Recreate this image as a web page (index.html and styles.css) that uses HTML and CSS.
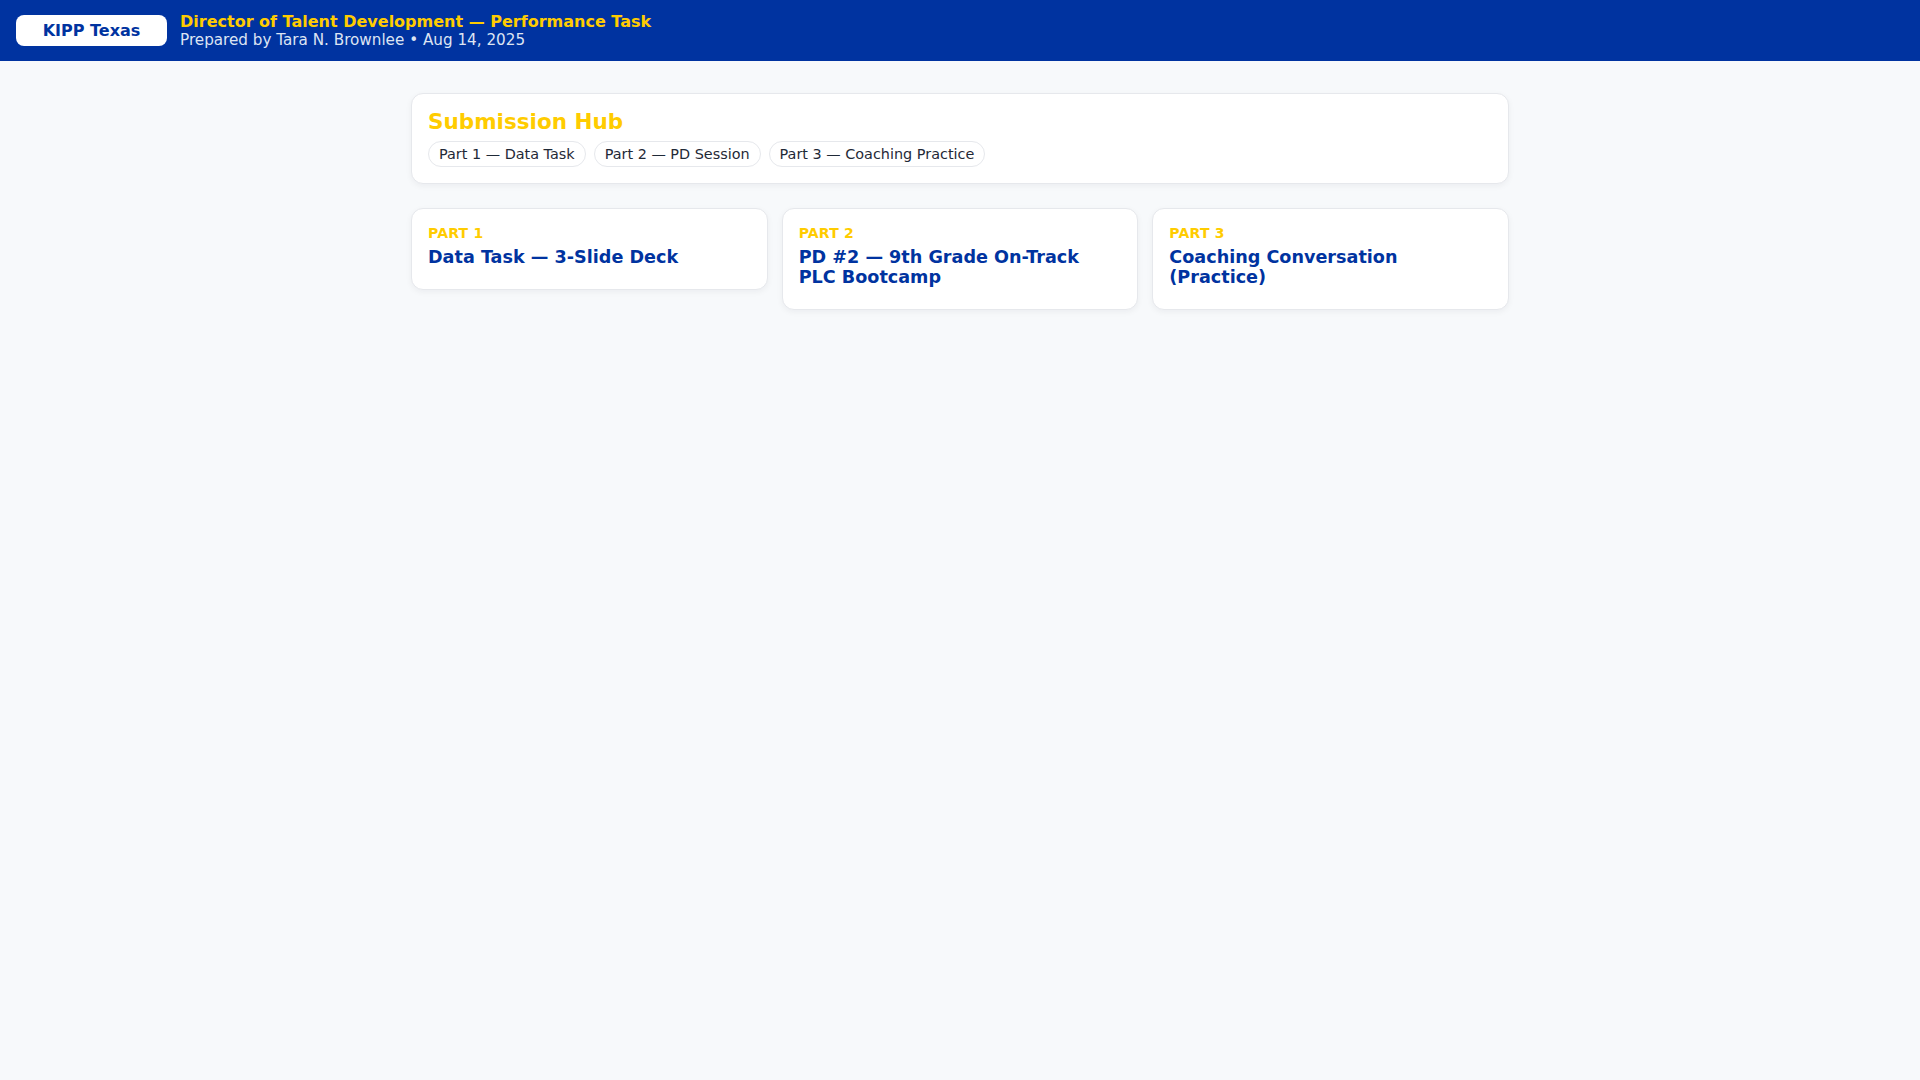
FILE: index.html
```html
<!DOCTYPE html>
<html lang="en">
<head>
<meta charset="utf-8">
<title>KIPP Texas — Submission Hub</title>
<link rel="stylesheet" href="styles.css">
</head>
<body>
<header class="topbar">
  <div class="brand">KIPP Texas</div>
  <div class="heading">
    <div class="heading-title">Director of Talent Development — Performance Task</div>
    <div class="heading-sub">Prepared by Tara N. Brownlee • Aug 14, 2025</div>
  </div>
</header>
<main class="wrap">
  <section class="card hub">
    <h2 class="hub-title">Submission Hub</h2>
    <div class="pills">
      <span class="pill">Part 1 — Data Task</span>
      <span class="pill">Part 2 — PD Session</span>
      <span class="pill">Part 3 — Coaching Practice</span>
    </div>
  </section>
  <section class="grid">
    <article class="card part">
      <div class="part-label">PART 1</div>
      <h3 class="part-title">Data Task — 3-Slide Deck</h3>
    </article>
    <article class="card part">
      <div class="part-label">PART 2</div>
      <h3 class="part-title">PD #2 — 9th Grade On-Track PLC Bootcamp</h3>
    </article>
    <article class="card part">
      <div class="part-label">PART 3</div>
      <h3 class="part-title">Coaching Conversation (Practice)</h3>
    </article>
  </section>
</main>
</body>
</html>
```
FILE: styles.css
```css
* { box-sizing: border-box; }
html, body { margin: 0; padding: 0; }
body {
  font-family: "DejaVu Sans", "Liberation Sans", sans-serif;
  background: #f7f9fb;
  color: #1f2937;
  min-height: 100vh;
}
.topbar {
  display: flex;
  align-items: center;
  gap: 13px;
  background: #0033a0;
  padding: 12px 16px;
  height: 61px;
}
.brand {
  background: #ffffff;
  color: #0033a0;
  font-weight: bold;
  font-size: 16px;
  border-radius: 8px;
  width: 151px;
  height: 31px;
  display: flex;
  align-items: center;
  justify-content: center;
}
.heading { display: flex; flex-direction: column; }
.heading-title {
  color: #ffcc00;
  font-weight: bold;
  font-size: 16px;
}
.heading-sub {
  color: #dde4f3;
  font-size: 15.2px;
}
.wrap {
  max-width: 1098px;
  margin: 0 auto;
  padding: 32px 0;
}
.card {
  background: #ffffff;
  border: 1px solid #e6e8ec;
  border-radius: 12px;
  box-shadow: 0 2px 6px rgba(15, 23, 42, 0.05);
}
.hub { padding: 15px 16px 16px; }
.hub-title {
  margin: 0 0 7px;
  color: #ffcc00;
  font-size: 21.5px;
  font-weight: bold;
}
.pills { display: flex; flex-wrap: wrap; gap: 8px; }
.pill {
  border: 1px solid #e6e8ec;
  border-radius: 999px;
  padding: 4px 10px 4px;
  font-size: 14.4px;
  color: #1f2937;
  background: #ffffff;
}
.grid {
  margin-top: 24px;
  display: grid;
  grid-template-columns: repeat(3, 1fr);
  gap: 14px;
  align-items: start;
}
.part { padding: 16px 16px 16px; }
.part-label {
  color: #ffcc00;
  font-weight: bold;
  font-size: 14px;
  letter-spacing: 0.2px;
}
.part-title {
  margin: 6px 0 6px;
  color: #0033a0;
  font-size: 17.6px;
  font-weight: bold;
}
```
